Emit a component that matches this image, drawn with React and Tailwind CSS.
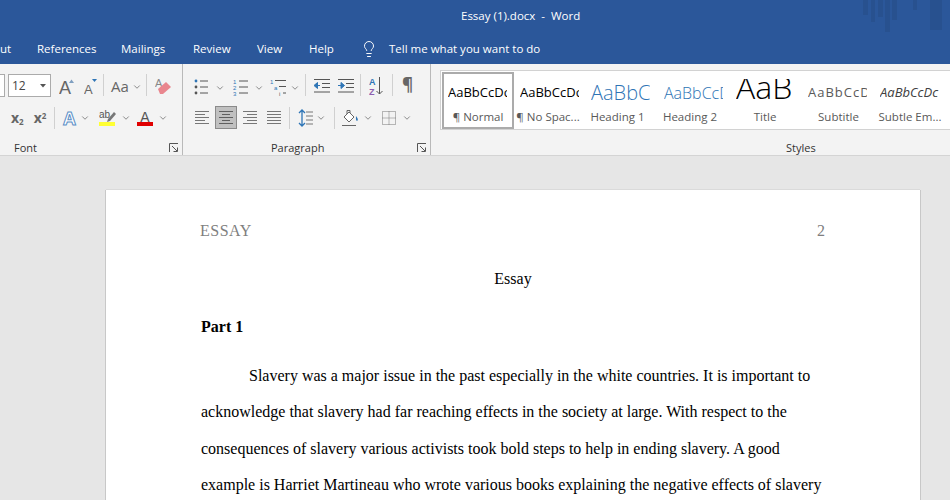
import { Lightbulb, ChevronDown } from 'lucide-react';

const sans = "font-['Open_Sans','Noto_Sans',sans-serif]";

const tabs = [
    { label: 'ut', width: 'w-[37px]' },
    { label: 'References', width: 'w-[84px]' },
    { label: 'Mailings', width: 'w-[72px]' },
    { label: 'Review', width: 'w-[64px]' },
    { label: 'View', width: 'w-[52px]' },
    { label: 'Help', width: 'w-[53px]' },
];

const gallery = [
    { sample: 'AaBbCcDc', name: '¶ Normal', cls: 'text-[13px] text-black', w: 'w-[72px]', pad: 'pl-[6px]', active: true },
    { sample: 'AaBbCcDc', name: '¶ No Spac...', cls: 'text-[13px] text-black', w: 'w-[68px]', pad: 'pl-[6px]' },
    { sample: 'AaBbCc', name: 'Heading 1', cls: 'text-[20px] font-light text-[#2e74b5]', w: 'w-[71px]', pad: 'pl-[9px]' },
    { sample: 'AaBbCcD', name: 'Heading 2', cls: 'text-[16px] font-light text-[#2e74b5]', w: 'w-[74px]', pad: 'pl-[11px]' },
    { sample: 'AaB', name: 'Title', cls: 'mb-[12px] text-[32px] leading-none font-light text-black', w: 'w-[76px]', pad: 'pl-[9px]' },
    { sample: 'AaBbCcD', name: 'Subtitle', cls: 'text-[13px] tracking-[1px] text-[#595959]', w: 'w-[71px]', pad: 'pl-[5px]' },
    { sample: 'AaBbCcDc', name: 'Subtle Em...', cls: 'text-[13px] italic text-[#404040]', w: 'w-[72px]', pad: 'pl-[6px]' },
];

const lines = [
    'Slavery was a major issue in the past especially in the white countries. It is important to',
    'acknowledge that slavery had far reaching effects in the society at large. With respect to the',
    'consequences of slavery various activists took bold steps to help in ending slavery. A good',
    'example is Harriet Martineau who wrote various books explaining the negative effects of slavery',
];

function Chev({ className = '' }) {
    return <ChevronDown size={10} strokeWidth={1.6} className={`shrink-0 text-[#555] ${className}`} />;
}

function Sep({ className = '' }) {
    return <div className={`h-[22px] w-px shrink-0 bg-[#d0d0d0] ${className}`} />;
}

function Launcher() {
    return (
        <svg width="10" height="10" viewBox="0 0 10 10" fill="none" stroke="#555" className="shrink-0">
            <path d="M0.5 9V0.5H9M3 3l5 5M8.5 4.5v4h-4" />
        </svg>
    );
}

// list glyphs are all the same three rows, only the marker differs
function ListIcon({ kind }) {
    return (
        <svg width="20" height="18" viewBox="0 0 20 18" fill="none" className="shrink-0">
            {kind === 'bullet' && (
                <>
                    <circle cx="2" cy="3" r="1.4" fill="#2e75b6" />
                    <circle cx="2" cy="9" r="1.4" fill="#555" />
                    <circle cx="2" cy="15" r="1.4" fill="#555" />
                    <path d="M6 3h8M6 9h8M6 15h8" stroke="#555" />
                </>
            )}
            {kind === 'number' && (
                <>
                    <text x="0" y="6" fontSize="6" fill="#2e75b6" fontFamily="Liberation Sans">1</text>
                    <text x="0" y="12" fontSize="6" fill="#2e75b6" fontFamily="Liberation Sans">2</text>
                    <text x="0" y="18" fontSize="6" fill="#2e75b6" fontFamily="Liberation Sans">3</text>
                    <path d="M6 3h9M6 9h9M6 15h9" stroke="#555" />
                </>
            )}
            {kind === 'multi' && (
                <>
                    <text x="0" y="6" fontSize="6" fill="#2e75b6" fontFamily="Liberation Sans">1</text>
                    <text x="4" y="12" fontSize="6" fill="#2e75b6" fontFamily="Liberation Sans">a</text>
                    <text x="9" y="18" fontSize="6" fill="#555" fontFamily="Liberation Sans">i</text>
                    <path d="M5 2.5h11M9 8.5h7M13 15h3" stroke="#555" />
                </>
            )}
        </svg>
    );
}

function IndentIcon({ flip }) {
    return (
        <svg width="18" height="14" viewBox="0 0 18 14" fill="none" className="shrink-0">
            <path d="M1 .5h16M9 4.5h8M9 8.5h8M1 13h16" stroke="#555" />
            <path d={flip ? 'M1 6.5h5M4 3.5l3.5 3-3.5 3z' : 'M7 6.5H3M4.5 3.5L1 6.5l3.5 3z'} stroke="#2e75b6" fill="#2e75b6" />
        </svg>
    );
}

function AlignIcon({ kind, active }) {
    const rows = {
        left: 'M0 .5h14M0 3.5h10M0 6.5h14M0 9.5h10M0 12.5h14',
        center: 'M0 .5h14M3 3.5h8M0 6.5h14M3 9.5h8M0 12.5h14',
        right: 'M0 .5h14M4 3.5h10M0 6.5h14M4 9.5h10M0 12.5h14',
        justify: 'M0 .5h14M0 3.5h14M0 6.5h14M0 9.5h14M0 12.5h14',
    }[kind];
    return (
        <div className={`flex h-[23px] w-[22px] shrink-0 items-center justify-center ${active ? 'border border-[#8a8a8a] bg-[#c0c0c0]' : ''}`}>
            <svg width="14" height="13" viewBox="0 0 14 13" fill="none">
                <path d={rows} stroke={active ? '#5f5f5f' : '#777'} />
            </svg>
        </div>
    );
}

export default function App() {
    return (
        <div className="relative h-[500px] w-[950px] overflow-hidden bg-[#e6e6e6]">
            {/* title bar */}
            <header className={`relative h-[64px] bg-[#2b579a] text-white ${sans}`}>
                <div className="pl-[461px] pt-[7px] text-[11.5px] leading-[18px] whitespace-pre">Essay (1).docx  -  Word</div>
                <div className="mt-[15px] flex items-center text-[11.5px] leading-[18px]">
                    {tabs.map((tab) => (
                        <span key={tab.label} className={`${tab.width} shrink-0`}>{tab.label}</span>
                    ))}
                    <Lightbulb size={18} strokeWidth={1.3} className="ml-[-2px] shrink-0" />
                    <span className="ml-[11px]">Tell me what you want to do</span>
                </div>
                {/* faint pattern behind the title */}
                <div className="absolute left-[863px] top-0 h-[15px] w-[5px] bg-[#28518f]" />
                <div className="absolute left-[871px] top-0 h-[22px] w-[4px] bg-[#28518f]" />
                <div className="absolute left-[878px] top-0 h-[17px] w-[5px] bg-[#28518f]" />
                <div className="absolute left-[885px] top-0 h-[32px] w-[5px] bg-[#28518f]" />
                <div className="absolute left-[892px] top-0 h-[20px] w-[5px] bg-[#28518f]" />
                <div className="absolute left-[913px] top-0 h-[10px] w-[4px] bg-[#28518f]" />
                <div className="absolute left-[930px] top-0 h-[30px] w-[12px] bg-[#28518f]" />
            </header>

            {/* ribbon */}
            <section className={`flex h-[92px] border-b border-[#d4d4d4] bg-[#f3f3f3] text-[#444] ${sans}`}>
                {/* font group */}
                <div className="flex w-[183px] shrink-0 flex-col border-r border-[#b9b9b9]">
                    <div className="flex h-[34px] items-end pb-[1px]">
                        <div className="h-[23px] w-[5px] shrink-0 border border-l-0 border-[#ababab] bg-white" />
                        <div className="ml-[3px] flex h-[23px] w-[43px] shrink-0 items-center justify-between border border-[#ababab] bg-white pl-[3px] pr-[4px] text-[12px]">
                            12
                            <svg width="6" height="4" viewBox="0 0 6 4"><path d="M0 0h6L3 3.5z" fill="#555" /></svg>
                        </div>
                        <svg width="15" height="18" viewBox="0 0 15 18" className="ml-[8px] mb-[2px] shrink-0">
                            <text x="0" y="17" fontSize="18" fill="#666" fontFamily="Liberation Sans">A</text>
                            <path d="M10 6l2.5-3.5L15 6z" fill="#7f9fc0" />
                        </svg>
                        <svg width="14" height="18" viewBox="0 0 14 18" className="ml-[10px] mb-[2px] shrink-0">
                            <text x="0" y="17" fontSize="13" fill="#666" fontFamily="Liberation Sans">A</text>
                            <path d="M8 2h5l-2.5 3z" fill="#2e75b6" />
                        </svg>
                        <Sep className="ml-[5px] mb-[1px]" />
                        <span className="ml-[7px] mb-[1px] text-[15px] leading-[20px] text-[#666]">Aa</span>
                        <Chev className="mb-[5px] ml-[3px]" />
                        <Sep className="ml-[4px] mb-[1px]" />
                        <svg width="18" height="20" viewBox="0 0 18 20" className="ml-[8px] mb-[1px] shrink-0">
                            <text x="0" y="11" fontSize="11" fill="#888" fontFamily="Liberation Sans">A</text>
                            <path d="M3 13l8-7 5 5-8 7H5z" fill="#e9868e" />
                        </svg>
                    </div>
                    <div className="mt-[7px] flex h-[25px] items-center">
                        <span className="ml-[11px] text-[14px] font-bold text-[#666]">x<sub className="text-[8px]">2</sub></span>
                        <span className="ml-[10px] text-[14px] font-bold text-[#666]">x<sup className="text-[8px]">2</sup></span>
                        <Sep className="ml-[8px]" />
                        <span className="ml-[8px] text-[18px] font-bold leading-none text-white [-webkit-text-stroke:1px_#5b8fc7]">A</span>
                        <Chev className="ml-[4px]" />
                        <svg width="17" height="18" viewBox="0 0 17 18" className="ml-[9px] shrink-0">
                            <text x="0" y="9" fontSize="10" fill="#555" fontFamily="Liberation Sans">ab</text>
                            <path d="M9 10l6-7 2 2-6 7-3 1z" fill="#777" />
                            <rect x="0" y="13" width="16" height="4" fill="#ffff33" />
                        </svg>
                        <Chev className="ml-[5px]" />
                        <svg width="16" height="18" viewBox="0 0 16 18" className="ml-[6px] shrink-0">
                            <text x="8" y="13" fontSize="14" textAnchor="middle" fill="#555" fontFamily="Liberation Sans">A</text>
                            <rect x="0" y="13" width="16" height="4" fill="#e00000" />
                        </svg>
                        <Chev className="ml-[5px]" />
                    </div>
                    <div className="mt-[11px] flex items-center justify-between pl-[14px] pr-[3px] text-[11px] leading-[14px] text-[#333]">
                        Font
                        <Launcher />
                    </div>
                </div>

                {/* paragraph group */}
                <div className="flex w-[248px] shrink-0 flex-col border-r border-[#b9b9b9]">
                    <div className="flex h-[34px] items-end pb-[2px] pl-[11px]">
                        <ListIcon kind="bullet" />
                        <Chev className="ml-[1px] mb-[3px]" />
                        <div className="w-[8px]" />
                        <ListIcon kind="number" />
                        <Chev className="ml-[1px] mb-[3px]" />
                        <div className="w-[6px]" />
                        <ListIcon kind="multi" />
                        <Chev className="mb-[3px]" />
                        <Sep className="ml-[5px]" />
                        <div className="ml-[7px] mb-[3px]"><IndentIcon /></div>
                        <div className="ml-[6px] mb-[3px]"><IndentIcon flip /></div>
                        <Sep className="ml-[5px]" />
                        <svg width="20" height="20" viewBox="0 0 20 20" className="ml-[8px] shrink-0">
                            <text x="0" y="9" fontSize="9" fontWeight="bold" fill="#2e75b6" fontFamily="Liberation Sans">A</text>
                            <text x="0" y="19" fontSize="9" fontWeight="bold" fill="#8e5fb0" fontFamily="Liberation Sans">Z</text>
                            <path d="M10.5 1v17M7.5 15l3 3 3-3" stroke="#555" fill="none" />
                        </svg>
                        <Sep className="ml-[3px]" />
                        <span className="ml-[9px] text-[17px] font-bold leading-[22px] text-[#666]">¶</span>
                    </div>
                    <div className="mt-[7px] flex h-[25px] items-center pl-[8px]">
                        <div className="flex gap-[2px]">
                            <AlignIcon kind="left" />
                            <AlignIcon kind="center" active />
                            <AlignIcon kind="right" />
                            <AlignIcon kind="justify" />
                        </div>
                        <Sep className="ml-[4px]" />
                        <svg width="16" height="18" viewBox="0 0 16 18" fill="none" className="ml-[8px] shrink-0">
                            <path d="M8 3h7M8 7h7M8 11h7M8 15h7" stroke="#777" />
                            <path d="M4 1v16M1 4l3-3 3 3M1 14l3 3 3-3" stroke="#2e75b6" strokeWidth="1.3" />
                        </svg>
                        <Chev className="ml-[2px]" />
                        <Sep className="ml-[8px]" />
                        <svg width="18" height="18" viewBox="0 0 18 18" fill="none" className="ml-[7px] shrink-0">
                            <path d="M2 8l5-5 5 5-5 5z" stroke="#666" fill="#fff" />
                            <path d="M5 5V1.5h3V4" stroke="#666" />
                            <path d="M14 7c2 2.5 2.5 4 1 5-1.500-1-1-2.500-1-5z" fill="#2e75b6" />
                            <path d="M0 16.5h14" stroke="#666" />
                        </svg>
                        <Chev className="ml-[3px]" />
                        <svg width="14" height="14" viewBox="0 0 14 14" fill="none" className="ml-[9px] shrink-0">
                            <path d="M.5.5h13v13H.5zM7 .5v13M.5 7h13" stroke="#777" strokeDasharray="1 1" />
                        </svg>
                        <Chev className="ml-[6px]" />
                    </div>
                    <div className="mt-[11px] flex items-center justify-between pl-[88px] pr-[3px] text-[11px] leading-[14px] text-[#333]">
                        Paragraph
                        <Launcher />
                    </div>
                </div>

                {/* styles group */}
                <div className="flex min-w-0 flex-1 flex-col">
                    <div className="ml-[9px] mt-[6px] flex h-[60px] shrink-0 overflow-hidden border-y border-l border-[#d2d2d2] bg-white pl-px pt-px">
                        {gallery.map((item) => (
                            <div key={item.name} className={`flex h-[57px] shrink-0 flex-col ${item.w} ${item.active ? 'border-2 border-[#ababab]' : 'pt-[2px]'}`}>
                                <div className={`mt-[5px] flex h-[28px] items-center overflow-hidden ${item.pad}`}>
                                    <div className={`w-[59px] shrink-0 overflow-hidden whitespace-nowrap ${item.active ? '-ml-[2px]' : ''}`}>
                                        <div className={`font-['Open_Sans',sans-serif] ${item.cls}`}>{item.sample}</div>
                                    </div>
                                </div>
                                <span className="mt-[2px] text-center text-[11.5px] leading-[16px] text-[#595959] whitespace-nowrap">{item.name}</span>
                            </div>
                        ))}
                    </div>
                    <div className="mt-[11px] pl-[355px] text-[11px] leading-[14px] text-[#333]">Styles</div>
                </div>
            </section>

            {/* document */}
            <main className="ml-[106px] mt-[34px] h-[400px] w-[814px] bg-white pl-[95px] pr-[95px] pt-[31px] font-['Liberation_Serif',serif] text-[16px] text-black shadow-[-1px_0_0_#c8c8c8,1px_0_0_#c8c8c8,0_-1px_0_#dadada]">
                <div className="-ml-px flex justify-between leading-[20px] text-[#7f7f7f]">
                    <span className="tracking-[0.5px]">ESSAY</span>
                    <span>2</span>
                </div>
                <p className="mt-[28px] text-center leading-[20px]">Essay</p>
                <p className="mt-[28px] font-bold leading-[20px]">Part 1</p>
                <div className="mt-[21px]">
                    {lines.map((line, i) => (
                        <p key={line} className={`whitespace-nowrap leading-[36.4px] ${i === 0 ? 'pl-[48px]' : ''}`}>{line}</p>
                    ))}
                </div>
            </main>
        </div>
    );
}
